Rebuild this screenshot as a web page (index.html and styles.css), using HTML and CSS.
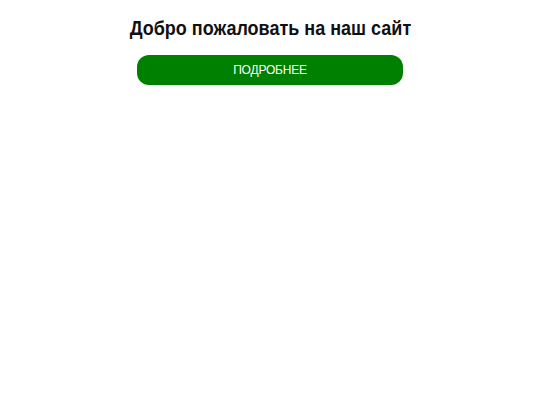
FILE: index.html
```html
<!DOCTYPE html>
<html lang="ru">
<head>
<meta charset="utf-8">
<title>Главная</title>
<link rel="stylesheet" href="styles.css">
</head>
<body>
  <main class="page">
    <h1 class="title">Добро пожаловать на наш сайт</h1>
    <a class="cta" href="#">Подробнее</a>
  </main>
</body>
</html>
```

FILE: styles.css
```css
html, body {
  margin: 0;
  padding: 0;
  background: #ffffff;
}

.page {
  display: flex;
  flex-direction: column;
  align-items: center;
  padding-top: 16px;
  font-family: "Liberation Sans Narrow", "Liberation Sans", Arial, sans-serif;
}

.title {
  margin: 0 0 15px;
  font-size: 20px;
  font-weight: bold;
  color: #111111;
  line-height: 24px;
  transform: scaleX(0.9);
}

.cta {
  display: flex;
  align-items: center;
  justify-content: center;
  width: 266px;
  height: 30px;
  border-radius: 12px;
  background: #008000;
  color: #ffffff;
  font-size: 12px;
  text-transform: uppercase;
  text-decoration: none;
  letter-spacing: -0.2px;
}
```
